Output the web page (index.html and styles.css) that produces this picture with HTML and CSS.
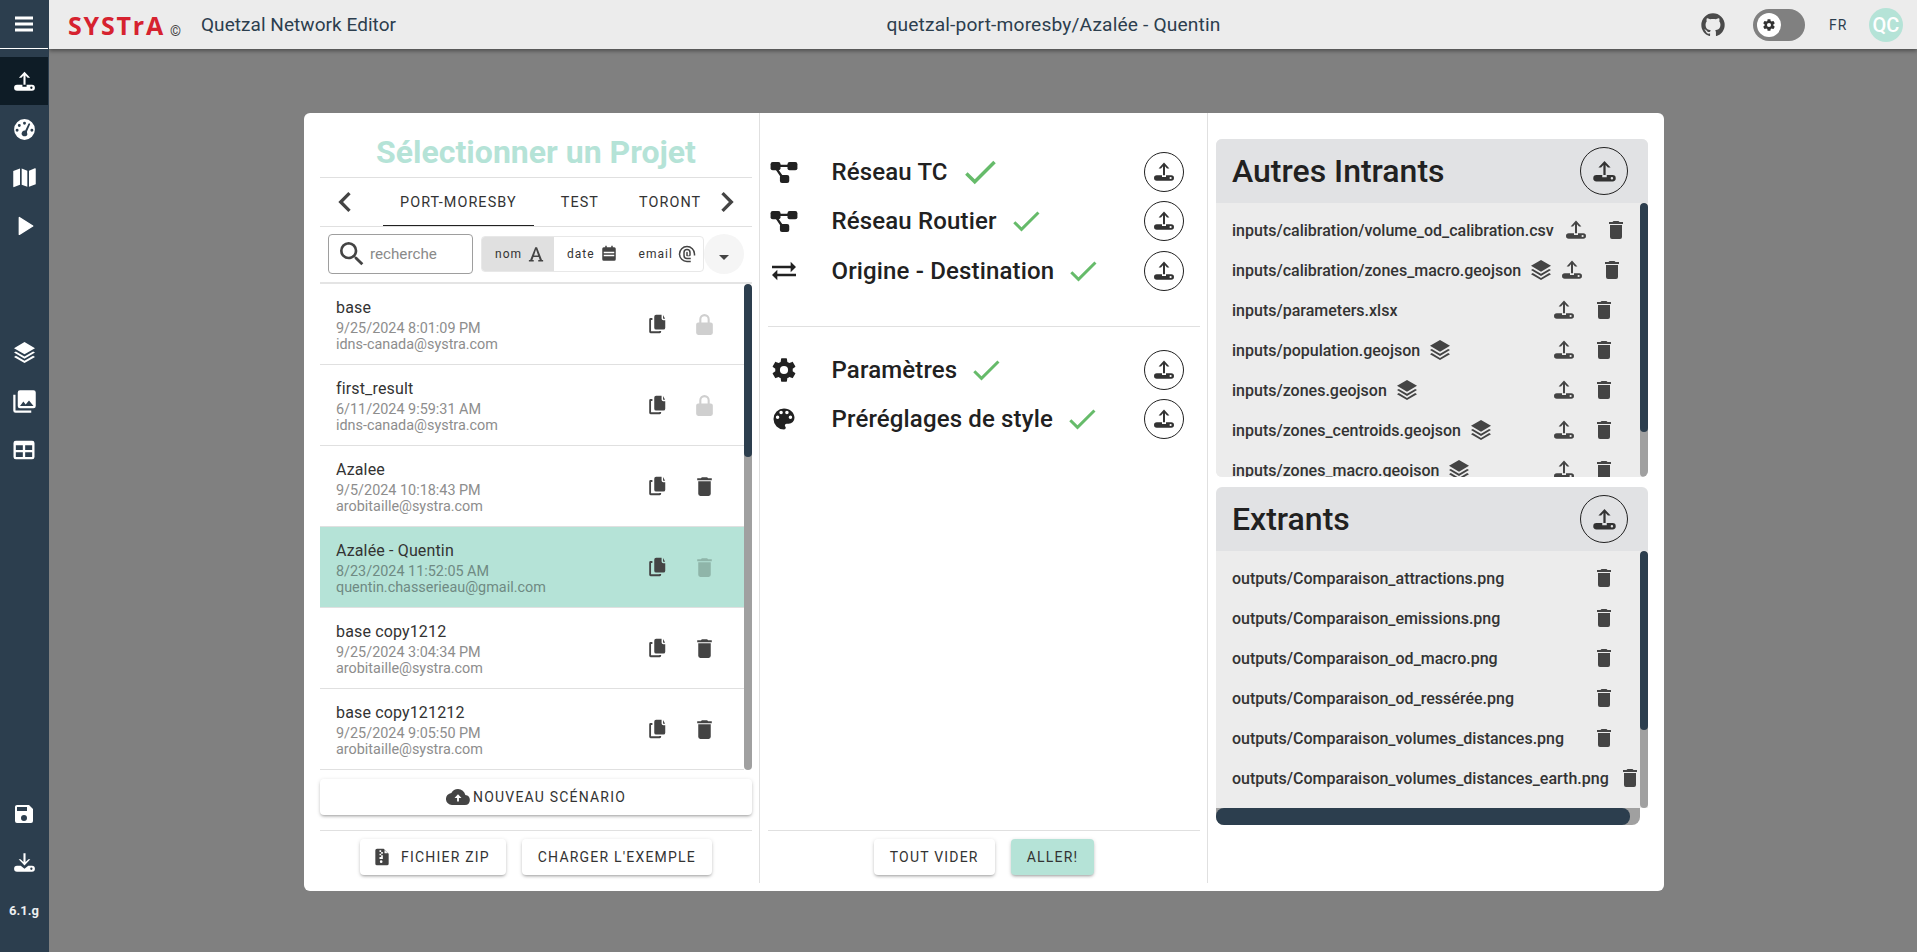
FILE: index.html
```html
<!DOCTYPE html>
<html lang="fr">
<head>
<meta charset="utf-8">
<title>Quetzal Network Editor</title>
<link rel="stylesheet" href="styles.css">
</head>
<body>
<svg class="defs" width="0" height="0" aria-hidden="true">
  <defs>
    <symbol id="i-upload" viewBox="0 0 24 24"><path fill-rule="evenodd" d="M12 2.600 17.400 8.400H15L13 6.300V15.200H11V6.300L9 8.400H6.600ZM4.800 15.200H10V17H14V15.200H19.200A2.800 2.800 0 0 1 19.200 20.800H4.800A2.800 2.800 0 0 1 4.800 15.200ZM18.600 16.900A1.100 1.100 0 1 0 18.600 19.100 1.100 1.100 0 1 0 18.600 16.900Z"/></symbol>
    <symbol id="i-download" viewBox="0 0 24 24"><path fill-rule="evenodd" d="M11 3H13V11.600L15.800 8.900H17.600L12 14.800 6.400 8.900H8.200L11 11.600ZM4.800 15.200H8.400L12 18 15.600 15.200H19.200A2.800 2.800 0 0 1 19.200 20.800H4.800A2.800 2.800 0 0 1 4.800 15.200ZM18.600 16.900A1.100 1.100 0 1 0 18.600 19.100 1.100 1.100 0 1 0 18.600 16.900Z"/></symbol>
    <symbol id="i-trash" viewBox="0 0 24 24"><path d="M19,4H15.500L14.500,3H9.500L8.500,4H5V6H19M6,19A2,2 0 0,0 8,21H16A2,2 0 0,0 18,19V7H6V19Z"/></symbol>
    <symbol id="i-copy" viewBox="0 0 24 24"><path d="M11 2H17V6A2 2 0 0 0 19 8H21V16A2 2 0 0 1 19 18H11A2 2 0 0 1 9 16V4A2 2 0 0 1 11 2ZM18.600 2.200 20.800 6.400H19A.9.9 0 0 1 18.600 5.600ZM3.500 7A1.500 1.500 0 0 1 5 5.500H7V7.500H5.500V20H14.500V19.500H16.500V20.500A1.500 1.500 0 0 1 15 22H5A1.500 1.500 0 0 1 3.500 20.500Z"/></symbol>
    <symbol id="i-lock" viewBox="0 0 24 24"><path d="M12,2A5,5 0 0,0 7,7V10H6A2,2 0 0,0 4,12V20A2,2 0 0,0 6,22H18A2,2 0 0,0 20,20V12A2,2 0 0,0 18,10H17V7A5,5 0 0,0 12,2M12,4A3,3 0 0,1 15,7V10H9V7A3,3 0 0,1 12,4Z"/></symbol>
    <symbol id="i-layers" viewBox="3 0 18 24" preserveAspectRatio="none"><path d="M12 16.540L19.370 10.800L21 12.070L12 19.070L3 12.070L4.620 10.810L12 16.540M12 14L3 7L12 0L21 7L12 14M12 21.470L19.370 15.730L21 17L12 24L3 17L4.620 15.740L12 21.470Z"/></symbol>
    <symbol id="i-check" viewBox="0 0 24 24"><path d="M21,7L9,19L3.500,13.500L4.910,12.090L9,16.170L19.590,5.590L21,7Z"/></symbol>
    <symbol id="i-graph" viewBox="0 0 24 24"><rect x=".5" y="3.500" width="8.500" height="7" rx="1.800"/><rect x="15" y="3.500" width="8.500" height="7" rx="1.800"/><rect x="8.500" y="14.500" width="8" height="7" rx="1.800"/><path d="M8 5.800H16V7.800H8ZM4.500 9.500 6.300 8.500 11.500 16 9.700 17.200Z"/></symbol>
  </defs>
</svg>
<div class="app">
  <aside class="sidebar">
    <div class="side-top">
      <svg class="ic24" viewBox="0 0 24 24"><path d="M3 4.500H21V7.500H3ZM3 10.500H21V13.500H3ZM3 16.500H21V19.500H3Z"/></svg>
    </div>
    <div class="side-group first">
      <div class="side-item active"><svg class="ic25"><use href="#i-upload"/></svg></div>
      <div class="side-item"><svg class="ic25" viewBox="0 0 24 24"><path fill-rule="evenodd" d="M12 2A10 10 0 1 1 12 22 10 10 0 1 1 12 2ZM12 4.600A1.400 1.400 0 1 0 12 7.400 1.400 1.400 0 1 0 12 4.600ZM7 6.800A1.400 1.400 0 1 0 7 9.600 1.400 1.400 0 1 0 7 6.800ZM4.900 11.300A1.400 1.400 0 1 0 4.900 14.100 1.400 1.400 0 1 0 4.900 11.300ZM19.100 11.300A1.400 1.400 0 1 0 19.100 14.100 1.400 1.400 0 1 0 19.100 11.300ZM15.800 6.500 12.700 13A2.600 2.600 0 0 0 9.600 14.600 2.600 2.600 0 0 0 11 18.500H13A2.600 2.600 0 0 0 14.400 15 2.600 2.600 0 0 0 14.400 14L17.300 7.300A.8.8 0 0 0 15.800 6.500Z"/></svg></div>
      <div class="side-item"><svg class="ic27" viewBox="0 0 24 24"><path d="M2 6.200 8 4V18.500L2.800 20.500A.6.6 0 0 1 2 20ZM9.500 4 14.500 6V20.300L9.500 18.400ZM16 6 21.200 3.800A.6.6 0 0 1 22 4.300V18L16 20.300Z"/></svg></div>
      <div class="side-item"><svg class="ic28" viewBox="0 0 24 24"><path d="M8,4.800V19.200L19.500,12Z" stroke="#fff" stroke-width="1.200" stroke-linejoin="round"/></svg></div>
    </div>
    <div class="side-group second">
      <div class="side-item"><svg class="ic21"><use href="#i-layers"/></svg></div>
      <div class="side-item"><svg class="ic27" viewBox="0 0 24 24"><path d="M22,16V4A2,2 0 0,0 20,2H8A2,2 0 0,0 6,4V16A2,2 0 0,0 8,18H20A2,2 0 0,0 22,16M11,12L13.030,14.710L16,11L20,16H8M2,6V20A2,2 0 0,0 4,22H18V20H4V6"/></svg></div>
      <div class="side-item"><svg class="ic28" viewBox="0 0 24 24"><path d="M5,4H19A2,2 0 0,1 21,6V18A2,2 0 0,1 19,20H5A2,2 0 0,1 3,18V6A2,2 0 0,1 5,4M5,8V12H11V8H5M13,8V12H19V8H13M5,14V18H11V14H5M13,14V18H19V14H13Z"/></svg></div>
    </div>
    <div class="side-group bottom">
      <div class="side-item"><svg class="ic24" viewBox="0 0 24 24"><path d="M15,9H5V5H15M12,19A3,3 0 0,1 9,16A3,3 0 0,1 12,13A3,3 0 0,1 15,16A3,3 0 0,1 12,19M17,3H5C3.890,3 3,3.900 3,5V19A2,2 0 0,0 5,21H19A2,2 0 0,0 21,19V7L17,3Z"/></svg></div>
      <div class="side-item"><svg class="ic25"><use href="#i-download"/></svg></div>
      <div class="side-item version">6.1.g</div>
    </div>
  </aside>
  <div class="main">
    <header class="topbar">
      <div class="brand">
        <span class="logo">SYSTrA</span>
        <span class="copyright">©</span>
        <span class="app-name">Quetzal Network Editor</span>
      </div>
      <div class="project-title">quetzal-port-moresby/Azalée - Quentin</div>
      <div class="top-actions">
        <svg class="github" viewBox="0 0 24 24"><path d="M12,2A10,10 0 0,0 2,12C2,16.420 4.870,20.170 8.840,21.500C9.340,21.580 9.500,21.270 9.500,21C9.500,20.770 9.500,20.140 9.500,19.310C6.730,19.910 6.140,17.970 6.140,17.970C5.680,16.810 5.030,16.500 5.030,16.500C4.120,15.880 5.100,15.900 5.100,15.900C6.100,15.970 6.630,16.930 6.630,16.930C7.500,18.450 8.970,18 9.540,17.760C9.630,17.110 9.890,16.670 10.170,16.420C7.950,16.170 5.620,15.310 5.620,11.500C5.620,10.390 6,9.500 6.650,8.790C6.550,8.540 6.200,7.500 6.750,6.150C6.750,6.150 7.590,5.880 9.500,7.170C10.290,6.950 11.150,6.840 12,6.840C12.850,6.840 13.710,6.950 14.500,7.170C16.410,5.880 17.250,6.150 17.250,6.150C17.800,7.500 17.450,8.540 17.350,8.790C18,9.500 18.380,10.390 18.380,11.500C18.380,15.320 16.040,16.160 13.810,16.410C14.170,16.720 14.500,17.330 14.500,18.260C14.500,19.600 14.500,20.680 14.500,21C14.500,21.270 14.660,21.590 15.170,21.500C19.140,20.160 22,16.420 22,12A10,10 0 0,0 12,2Z"/></svg>
        <div class="toggle"><span class="knob"><svg class="gear" viewBox="0 0 24 24"><path fill-rule="evenodd" d="M12 8.500A3.500 3.500 0 1 0 12 15.500 3.500 3.500 0 1 0 12 8.500ZM19.430,12.970C19.470,12.650 19.500,12.330 19.500,12C19.500,11.670 19.470,11.340 19.430,11L21.540,9.370C21.730,9.220 21.780,8.950 21.660,8.730L19.660,5.270C19.540,5.050 19.270,4.960 19.050,5.050L16.560,6.050C16.040,5.660 15.500,5.320 14.870,5.070L14.500,2.420C14.460,2.180 14.250,2 14,2H10C9.750,2 9.540,2.180 9.500,2.420L9.130,5.070C8.500,5.320 7.960,5.660 7.440,6.050L4.950,5.050C4.730,4.960 4.460,5.050 4.340,5.270L2.340,8.730C2.210,8.950 2.270,9.220 2.460,9.370L4.570,11C4.530,11.340 4.500,11.670 4.500,12C4.500,12.330 4.530,12.650 4.570,12.970L2.460,14.630C2.270,14.780 2.210,15.050 2.340,15.270L4.340,18.730C4.460,18.950 4.730,19.030 4.950,18.950L7.440,17.940C7.960,18.340 8.500,18.680 9.130,18.930L9.500,21.580C9.540,21.820 9.750,22 10,22H14C14.250,22 14.460,21.820 14.500,21.580L14.870,18.930C15.500,18.670 16.040,18.340 16.560,17.940L19.050,18.950C19.270,19.030 19.540,18.950 19.660,18.730L21.660,15.270C21.780,15.050 21.730,14.780 21.540,14.630L19.430,12.970Z"/></svg></span></div>
        <span class="lang">FR</span>
        <span class="avatar">QC</span>
      </div>
    </header>
    <main class="stage">
      <section class="dialog">
        <div class="col col-left">
          <h2 class="dialog-title">Sélectionner un Projet</h2>
          <div class="tabs">
            <svg class="chev" viewBox="0 0 24 24"><path d="M15.410,16.580L10.830,12L15.410,7.410L14,6L8,12L14,18L15.410,16.580Z"/></svg>
            <div class="tab-strip">
              <span class="tab active">PORT-MORESBY</span>
              <span class="tab">TEST</span>
              <span class="tab clipped">TORONT</span>
            </div>
            <svg class="chev" viewBox="0 0 24 24"><path d="M8.590,16.580L13.170,12L8.590,7.410L10,6L16,12L10,18L8.590,16.580Z"/></svg>
          </div>
          <div class="filters">
            <div class="search">
              <svg class="search-ic" viewBox="0 0 24 24"><path d="M9.500,3A6.500,6.500 0 0,1 16,9.500C16,11.110 15.410,12.590 14.440,13.730L14.710,14H15.500L20.500,19L19,20.500L14,15.500V14.710L13.730,14.440C12.590,15.410 11.110,16 9.500,16A6.500,6.500 0 0,1 3,9.500A6.500,6.500 0 0,1 9.500,3M9.500,5C7,5 5,7 5,9.500C5,12 7,14 9.500,14C12,14 14,12 14,9.500C14,7 12,5 9.500,5Z"/></svg>
              <span class="search-ph">recherche</span>
            </div>
            <div class="sort-group">
              <span class="sort on">nom <svg class="sort-ic" viewBox="0 0 24 24"><path d="M11 3H13.400L20 20H21.500V22H15V20H17L15.600 16H8.600L7.200 20H9V22H2.500V20H4.200ZM12 5.900 9.400 14H14.800Z"/></svg></span>
              <span class="sort">date <svg class="sort-ic" viewBox="0 0 24 24"><path fill-rule="evenodd" d="M7 1H9V3H15V1H17V3H19A2 2 0 0 1 21 5V19A2 2 0 0 1 19 21H5A2 2 0 0 1 3 19V5A2 2 0 0 1 5 3H7ZM5 9V11H19V9ZM5 13V15H19V13Z"/></svg></span>
              <span class="sort">email <svg class="sort-ic" viewBox="0 0 24 24"><path d="M17,12V10A5,5 0 0,0 12,5A5,5 0 0,0 7,10V14A5,5 0 0,0 12,19H17V17H12A3,3 0 0,1 9,14V10A3,3 0 0,1 12,7A3,3 0 0,1 15,10V14H13V10A1,1 0 0,0 12,9A1,1 0 0,0 11,10V14A1,1 0 0,0 12,15H15A2,2 0 0,0 17,13ZM12 1A11 11 0 0 0 1 12 11 11 0 0 0 12 23H17V21H12A9 9 0 0 1 3 12 9 9 0 0 1 21 12V14H23V12A11 11 0 0 0 12 1Z"/></svg></span>
            </div>
            <span class="sort-dir"><svg class="caret" viewBox="0 0 24 24"><path d="M7,10L12,15L17,10H7Z"/></svg></span>
          </div>
          <div class="project-wrap">
            <ul class="projects">
              <li class="project">
                <div class="p-text"><div class="p-name">base</div><div class="p-meta">9/25/2024 8:01:09 PM</div><div class="p-meta">idns-canada@systra.com</div></div>
                <svg class="act cp"><use href="#i-copy"/></svg><svg class="act muted"><use href="#i-lock"/></svg>
              </li>
              <li class="project">
                <div class="p-text"><div class="p-name">first_result</div><div class="p-meta">6/11/2024 9:59:31 AM</div><div class="p-meta">idns-canada@systra.com</div></div>
                <svg class="act cp"><use href="#i-copy"/></svg><svg class="act muted"><use href="#i-lock"/></svg>
              </li>
              <li class="project">
                <div class="p-text"><div class="p-name">Azalee</div><div class="p-meta">9/5/2024 10:18:43 PM</div><div class="p-meta">arobitaille@systra.com</div></div>
                <svg class="act cp"><use href="#i-copy"/></svg><svg class="act"><use href="#i-trash"/></svg>
              </li>
              <li class="project selected">
                <div class="p-text"><div class="p-name">Azalée - Quentin</div><div class="p-meta">8/23/2024 11:52:05 AM</div><div class="p-meta">quentin.chasserieau@gmail.com</div></div>
                <svg class="act cp"><use href="#i-copy"/></svg><svg class="act muted"><use href="#i-trash"/></svg>
              </li>
              <li class="project">
                <div class="p-text"><div class="p-name">base copy1212</div><div class="p-meta">9/25/2024 3:04:34 PM</div><div class="p-meta">arobitaille@systra.com</div></div>
                <svg class="act cp"><use href="#i-copy"/></svg><svg class="act"><use href="#i-trash"/></svg>
              </li>
              <li class="project">
                <div class="p-text"><div class="p-name">base copy121212</div><div class="p-meta">9/25/2024 9:05:50 PM</div><div class="p-meta">arobitaille@systra.com</div></div>
                <svg class="act cp"><use href="#i-copy"/></svg><svg class="act"><use href="#i-trash"/></svg>
              </li>
            </ul>
            <div class="vbar list-bar"><div class="thumb"></div></div>
          </div>
          <button class="btn btn-wide"><svg class="btn-ic" viewBox="0 0 24 24"><path d="M19.350 10.030A7.490 7.490 0 0 0 12 4 7.500 7.500 0 0 0 5.350 8.030 6 6 0 0 0 6 20H19A5 5 0 0 0 19.350 10.030ZM12.900 13V16.500H11.100V13H8.500L12 9.200 15.500 13Z" fill-rule="evenodd"/></svg>NOUVEAU SCÉNARIO</button>
          <div class="actions">
            <button class="btn zip"><svg class="zip-ic" viewBox="0 0 24 24"><path fill-rule="evenodd" d="M6 2H14L20 8V20A2 2 0 0 1 18 22H6A2 2 0 0 1 4 20V4A2 2 0 0 1 6 2ZM15 3.500V7.500H19ZM9 4V6H11V4ZM11 6V8H13V6ZM9 8V10H11V8ZM11 10V12H13V10ZM9 12V14.500H13V12ZM11 16A1.600 1.600 0 1 0 11 19.200 1.600 1.600 0 1 0 11 16Z"/></svg>FICHIER ZIP</button>
            <button class="btn">CHARGER L'EXEMPLE</button>
          </div>
        </div>
        <div class="col col-mid">
          <div class="inputs">
            <div class="req">
              <svg class="req-ic"><use href="#i-graph"/></svg>
              <span class="req-label">Réseau TC</span>
              <svg class="ok big"><use href="#i-check"/></svg>
              <span class="circle-btn"><svg class="up"><use href="#i-upload"/></svg></span>
            </div>
            <div class="req">
              <svg class="req-ic"><use href="#i-graph"/></svg>
              <span class="req-label">Réseau Routier</span>
              <svg class="ok"><use href="#i-check"/></svg>
              <span class="circle-btn"><svg class="up"><use href="#i-upload"/></svg></span>
            </div>
            <div class="req">
              <svg class="req-ic swap" viewBox="3 3 18 18"><path d="M3 8H17V5L21 9 17 13V10H3ZM21 14H7V11L3 15 7 19V16H21Z"/></svg>
              <span class="req-label">Origine - Destination</span>
              <svg class="ok"><use href="#i-check"/></svg>
              <span class="circle-btn"><svg class="up"><use href="#i-upload"/></svg></span>
            </div>
          </div>
          <div class="inputs second">
            <div class="req">
              <svg class="req-ic" viewBox="0 0 24 24"><path d="M12,15.500A3.500,3.500 0 0,1 8.500,12A3.500,3.500 0 0,1 12,8.500A3.500,3.500 0 0,1 15.500,12A3.500,3.500 0 0,1 12,15.500M19.430,12.970C19.470,12.650 19.500,12.330 19.500,12C19.500,11.670 19.470,11.340 19.430,11L21.540,9.370C21.730,9.220 21.780,8.950 21.660,8.730L19.660,5.270C19.540,5.050 19.270,4.960 19.050,5.050L16.560,6.050C16.040,5.660 15.500,5.320 14.870,5.070L14.500,2.420C14.460,2.180 14.250,2 14,2H10C9.750,2 9.540,2.180 9.500,2.420L9.130,5.070C8.500,5.320 7.960,5.660 7.440,6.050L4.950,5.050C4.730,4.960 4.460,5.050 4.340,5.270L2.340,8.730C2.210,8.950 2.270,9.220 2.460,9.370L4.570,11C4.530,11.340 4.500,11.670 4.500,12C4.500,12.330 4.530,12.650 4.570,12.970L2.460,14.630C2.270,14.780 2.210,15.050 2.340,15.270L4.340,18.730C4.460,18.950 4.730,19.030 4.950,18.950L7.440,17.940C7.960,18.340 8.500,18.680 9.130,18.930L9.500,21.580C9.540,21.820 9.750,22 10,22H14C14.250,22 14.460,21.820 14.500,21.580L14.870,18.930C15.500,18.670 16.040,18.340 16.560,17.940L19.050,18.950C19.270,19.030 19.540,18.950 19.660,18.730L21.660,15.270C21.780,15.050 21.730,14.780 21.540,14.630L19.430,12.970Z"/></svg>
              <span class="req-label">Paramètres</span>
              <svg class="ok"><use href="#i-check"/></svg>
              <span class="circle-btn"><svg class="up"><use href="#i-upload"/></svg></span>
            </div>
            <div class="req">
              <svg class="req-ic" viewBox="0 0 24 24"><path d="M17.500,12A1.500,1.500 0 0,1 16,10.500A1.500,1.500 0 0,1 17.500,9A1.500,1.500 0 0,1 19,10.500A1.500,1.500 0 0,1 17.500,12M14.500,8A1.500,1.500 0 0,1 13,6.500A1.500,1.500 0 0,1 14.500,5A1.500,1.500 0 0,1 16,6.500A1.500,1.500 0 0,1 14.500,8M9.500,8A1.500,1.500 0 0,1 8,6.500A1.500,1.500 0 0,1 9.500,5A1.500,1.500 0 0,1 11,6.500A1.500,1.500 0 0,1 9.500,8M6.500,12A1.500,1.500 0 0,1 5,10.500A1.500,1.500 0 0,1 6.500,9A1.500,1.500 0 0,1 8,10.500A1.500,1.500 0 0,1 6.500,12M12,3A9,9 0 0,0 3,12A9,9 0 0,0 12,21A1.500,1.500 0 0,0 13.500,19.500C13.500,19.110 13.350,18.760 13.110,18.500C12.880,18.230 12.730,17.880 12.730,17.500A1.500,1.500 0 0,1 14.230,16H16A5,5 0 0,0 21,11C21,6.580 16.970,3 12,3Z"/></svg>
              <span class="req-label">Préréglages de style</span>
              <svg class="ok"><use href="#i-check"/></svg>
              <span class="circle-btn"><svg class="up"><use href="#i-upload"/></svg></span>
            </div>
          </div>
          <div class="actions mid-actions">
            <button class="btn">TOUT VIDER</button>
            <button class="btn primary">ALLER!</button>
          </div>
        </div>
        <div class="col col-right">
          <div class="panel panel-in">
            <div class="panel-head"><h3>Autres Intrants</h3><span class="circle-btn large"><svg class="up"><use href="#i-upload"/></svg></span></div>
            <div class="panel-body">
              <ul class="files">
                <li class="file"><span>inputs/calibration/volume_od_calibration.csv</span><svg class="fa tail"><use href="#i-upload"/></svg><svg class="fa del"><use href="#i-trash"/></svg></li>
                <li class="file"><span>inputs/calibration/zones_macro.geojson</span><svg class="fa layer"><use href="#i-layers"/></svg><svg class="fa tail2"><use href="#i-upload"/></svg><svg class="fa del"><use href="#i-trash"/></svg></li>
                <li class="file"><span>inputs/parameters.xlsx</span><svg class="fa push"><use href="#i-upload"/></svg><svg class="fa del"><use href="#i-trash"/></svg></li>
                <li class="file"><span>inputs/population.geojson</span><svg class="fa layer"><use href="#i-layers"/></svg><svg class="fa push"><use href="#i-upload"/></svg><svg class="fa del"><use href="#i-trash"/></svg></li>
                <li class="file"><span>inputs/zones.geojson</span><svg class="fa layer"><use href="#i-layers"/></svg><svg class="fa push"><use href="#i-upload"/></svg><svg class="fa del"><use href="#i-trash"/></svg></li>
                <li class="file"><span>inputs/zones_centroids.geojson</span><svg class="fa layer"><use href="#i-layers"/></svg><svg class="fa push"><use href="#i-upload"/></svg><svg class="fa del"><use href="#i-trash"/></svg></li>
                <li class="file"><span>inputs/zones_macro.geojson</span><svg class="fa layer"><use href="#i-layers"/></svg><svg class="fa push"><use href="#i-upload"/></svg><svg class="fa del"><use href="#i-trash"/></svg></li>
              </ul>
              <div class="vbar in-bar"><div class="thumb"></div></div>
            </div>
          </div>
          <div class="panel panel-out">
            <div class="panel-head"><h3>Extrants</h3><span class="circle-btn large"><svg class="up"><use href="#i-upload"/></svg></span></div>
            <div class="panel-body">
              <ul class="files">
                <li class="file"><span>outputs/Comparaison_attractions.png</span><svg class="fa push-del"><use href="#i-trash"/></svg></li>
                <li class="file"><span>outputs/Comparaison_emissions.png</span><svg class="fa push-del"><use href="#i-trash"/></svg></li>
                <li class="file"><span>outputs/Comparaison_od_macro.png</span><svg class="fa push-del"><use href="#i-trash"/></svg></li>
                <li class="file"><span>outputs/Comparaison_od_ressérée.png</span><svg class="fa push-del"><use href="#i-trash"/></svg></li>
                <li class="file"><span>outputs/Comparaison_volumes_distances.png</span><svg class="fa push-del"><use href="#i-trash"/></svg></li>
                <li class="file"><span>outputs/Comparaison_volumes_distances_earth.png</span><svg class="fa last-del"><use href="#i-trash"/></svg></li>
              </ul>
              <div class="vbar out-bar"><div class="thumb"></div></div>
            </div>
            <div class="hbar"><div class="hthumb"></div></div>
          </div>
        </div>
      </section>
    </main>
  </div>
</div>
</body>
</html>
```
FILE: styles.css
```css
* { box-sizing: border-box; }
html, body { margin: 0; height: 100%; overflow: hidden; }
body { font-family: Roboto, "Liberation Sans", sans-serif; color: #212121; background: #808080; }
.defs { position: absolute; }
svg { fill: currentColor; display: block; flex: none; }
ul { list-style: none; margin: 0; padding: 0; }
h2, h3 { margin: 0; }
button { font-family: inherit; border: 0; cursor: pointer; }

.app { display: flex; height: 952px; }

/* sidebar */
.sidebar { width: 49px; flex: none; background: #2c3e4e; color: #fff; display: flex; flex-direction: column; z-index: 3; }
.side-top { width: 48px; height: 49px; flex: none; display: flex; align-items: center; justify-content: center; border-bottom: 1px solid #fff; }
.side-group { display: flex; flex-direction: column; }
.side-group.first { margin-top: 8px; }
.side-group.second { margin-top: 78px; }
.side-group.bottom { margin-top: auto; margin-bottom: 17px; }
.side-item { width: 48px; height: 48.500px; display: flex; align-items: center; justify-content: center; }
.side-item.active { background: #0e1c26; height: 48px; }
.ic21 { width: 21px; height: 21px; }
.ic24 { width: 24px; height: 24px; }
.ic25 { width: 25px; height: 25px; }
.ic27 { width: 27px; height: 27px; }
.ic28 { width: 28px; height: 28px; }
.version { font-size: 13px; font-weight: 700; color: #eceff1; }

/* top bar */
.main { flex: 1; min-width: 0; display: flex; flex-direction: column; }
.topbar { height: 49px; flex: none; background: #ececec; display: flex; align-items: center; padding: 0 14px 0 19px; box-shadow: 0 2px 4px rgba(0,0,0,.4); z-index: 2; color: #2c3e4e; }
.brand { display: flex; align-items: center; }
.logo { font-family: "Open Sans", sans-serif; font-weight: 700; font-size: 25px; line-height: 24px; letter-spacing: 1.800px; color: #d6222f; width: 102px; }
.copyright { font-size: 14px; color: #444; margin-top: 13px; width: 31px; }
.app-name { font-size: 19px; letter-spacing: .05px; color: #2c3e4e; }
.project-title { flex: 1; text-align: center; font-size: 19.200px; letter-spacing: .15px; color: #2c3e4e; padding-left: 12px; }
.top-actions { display: flex; align-items: center; }
.github { width: 28px; height: 28px; color: #4a4a4a; margin-right: 26px; }
.toggle { width: 52px; height: 32px; background: #808080; border-radius: 16px; padding: 4px; }
.knob { width: 24px; height: 24px; background: #fff; border-radius: 50%; display: flex; align-items: center; justify-content: center; color: #333; }
.gear { width: 14px; height: 14px; }
.lang { font-size: 14px; letter-spacing: .9px; margin-left: 24px; width: 40px; }
.avatar { width: 34px; height: 34px; border-radius: 50%; background: #b5e3d7; color: #fff; font-size: 20px; font-weight: 500; display: flex; align-items: center; justify-content: center; }

/* stage + dialog */
.stage { flex: 1; min-height: 0; display: flex; justify-content: flex-start; padding: 64px 0 0 255px; }
.dialog { width: 1360px; height: 778px; background: #fff; border-radius: 6px; display: flex; padding: 0 16px; }
.col { display: flex; flex-direction: column; }
.col-left { width: 432px; margin-right: 7px; }
.col-mid { width: 449px; border-left: 1px solid #e0e0e0; border-right: 1px solid #e0e0e0; padding: 0 7px 6px 8px; margin: 0 8px 8px 0; }
.col-right { width: 432px; padding-top: 26px; }

.dialog-title { height: 64px; font-size: 32px; font-weight: 700; color: #b5e3d7; text-align: center; line-height: 78px; }
.tabs { height: 50px; border-top: 1px solid #e0e0e0; border-bottom: 1px solid #e0e0e0; display: flex; align-items: center; padding: 0 5px; }
.chev { width: 40px; height: 40px; color: #444; }
.tab-strip { flex: 1; height: 100%; display: flex; overflow: hidden; padding-left: 18px; }
.tab { height: 49px; flex: none; display: flex; align-items: center; padding: 0 17px; font-size: 14.400px; letter-spacing: 1.100px; font-weight: 400; color: #333; }
.tab.active { border-bottom: 2.500px solid #212121; padding-top: 1px; }
.tab:nth-child(2) { padding: 0 20px 0 27px; }
.tab.clipped { padding: 0 0 0 20px; }

.filters { height: 57px; display: flex; align-items: center; padding: 0 0 2px 8px; border-bottom: 2px solid #e4e4e4; }
.search { width: 145px; height: 40px; border: 1px solid #9e9e9e; border-radius: 4px; display: flex; align-items: center; padding-left: 7px; }
.search-ic { width: 32px; height: 32px; color: #444; margin-right: 2px; }
.search-ph { font-size: 15.200px; color: #8a8a8a; }
.sort-group { width: 223px; height: 36px; margin-left: 8px; display: flex; border: 1px solid #e8e8e8; border-radius: 4px; overflow: hidden; }
.sort { display: flex; align-items: center; gap: 5px; font-size: 12px; letter-spacing: 1px; color: #333; padding: 0 11px 0 13px; white-space: nowrap; }
.sort.on { background: #e0e0e0; width: 72px; }
.sort:last-child { padding: 0 0 0 10px; }
.sort-ic { width: 18px; height: 18px; color: #444; }
.sort-dir { width: 40px; height: 40px; border-radius: 50%; background: #f5f5f5; display: flex; align-items: center; justify-content: center; }
.caret { width: 24px; height: 24px; color: #444; margin-top: 6px; }

.project-wrap { position: relative; height: 486px; flex: none; }
.projects { height: 100%; overflow: hidden; padding-right: 8px; }
.project { height: 81px; border-bottom: 1px solid #e0e0e0; display: flex; align-items: center; padding: 0 27px 0 16px; gap: 24.500px; }
.project.selected { background: #b5e3d7; }
.p-text { flex: 1; min-width: 0; padding-top: 3px; }
.p-name { font-size: 16px; letter-spacing: .15px; line-height: 20px; margin-bottom: 2.500px; color: #333; }
.p-meta { font-size: 14.400px; line-height: 16px; color: #8d8d8d; }
.selected .p-meta { color: #6f8a83; }
.act { width: 25px; height: 25px; color: #444; }
.act.cp { width: 22px; height: 22px; }
.act.muted { color: #cfcfcf; }
.selected .act.muted { color: #8fb5a9; }

.vbar { position: absolute; right: 0; top: 0; bottom: 0; width: 8px; background: #a0a0a0; border-radius: 4px; overflow: hidden; }
.thumb { background: #2c3e4e; border-radius: 4px; width: 8px; }
.list-bar .thumb { height: 173px; }

.btn { height: 36px; background: #fff; border-radius: 4px; box-shadow: 0 2px 3px -1px rgba(0,0,0,.3), 0 1px 4px rgba(0,0,0,.14); font-size: 14px; letter-spacing: 1.200px; color: #333; display: flex; align-items: center; justify-content: center; padding: 0 16px; font-weight: 400; }
.btn-wide { width: 432px; margin-top: 9px; flex: none; }
.btn-ic { width: 24px; height: 24px; color: #444; margin-right: 3px; }
.zip-ic { width: 20px; height: 20px; color: #444; margin-right: 9px; margin-left: -4px; }
.actions { margin-top: 15px; border-top: 1px solid #e0e0e0; height: 47px; flex: none; padding-top: 8px; display: flex; justify-content: center; gap: 16px; }
.primary { background: #b5e3d7; }

.inputs { padding-top: 38.500px; display: flex; flex-direction: column; gap: 9.500px; }
.inputs.second { margin-top: 35px; border-top: 1px solid #e0e0e0; padding-top: 23px; flex: 1; gap: 9px; }
.req { height: 40px; display: flex; align-items: center; padding-left: 2px; }
.req-ic { width: 28px; height: 28px; color: #212121; margin-right: 33.500px; }
.req-ic.swap { width: 24px; height: 24px; margin: 0 35.500px 0 2px; }
.req-label { font-size: 24px; letter-spacing: .15px; font-weight: 500; color: #212121; }
.ok { width: 36px; height: 36px; color: #66bb6a; margin-left: 11px; }
.ok.big { width: 42px; height: 42px; }
.circle-btn { margin-left: auto; width: 40px; height: 40px; border-radius: 50%; border: 1px solid #212121; display: flex; align-items: center; justify-content: center; color: #333; margin-right: 16px; }
.circle-btn.large { width: 48px; height: 48px; margin-right: 20px; }
.circle-btn .up { width: 24px; height: 24px; }
.circle-btn.large .up { width: 27px; height: 27px; }
.mid-actions { margin-top: 0; }

.panel { background: #ececec; border-radius: 6px 6px 0 0; display: flex; flex-direction: column; overflow: hidden; }
.panel-in { height: 338px; border-radius: 6px; margin-bottom: 10px; }
.panel-out { height: 338px; background: transparent; }
.panel-head { height: 64px; flex: none; background: #e1e2e4; display: flex; align-items: center; justify-content: space-between; padding-left: 16px; }
.panel-head h3 { font-size: 32px; font-weight: 500; color: #212121; }
.panel-body { position: relative; flex: 1; min-height: 0; overflow: hidden; background: #ececec; }
.files { padding: 7px 0 0 16px; }
.file { height: 40px; display: flex; align-items: center; font-size: 16px; font-weight: 500; color: #333; white-space: nowrap; }
.fa { width: 24px; height: 24px; color: #444; }
.layer { margin-left: 10px; width: 20px; height: 20px; }
.tail { margin-left: 10px; }
.tail2 { margin-left: 9px; }
.del { margin-left: 16px; }
.push { margin-left: auto; }
.push + .del { margin-right: 32px; }
.push-del { margin-left: auto; margin-right: 32px; }
.last-del { margin-left: 9px; }
.in-bar .thumb { height: 229px; }
.out-bar .thumb { height: 179px; }
.hbar { height: 17px; flex: none; width: 424px; background: #a0a0a0; border-radius: 0 0 8px 8px; }
.hthumb { width: 414px; height: 17px; background: #2c3e4e; border-radius: 8px; }
```
